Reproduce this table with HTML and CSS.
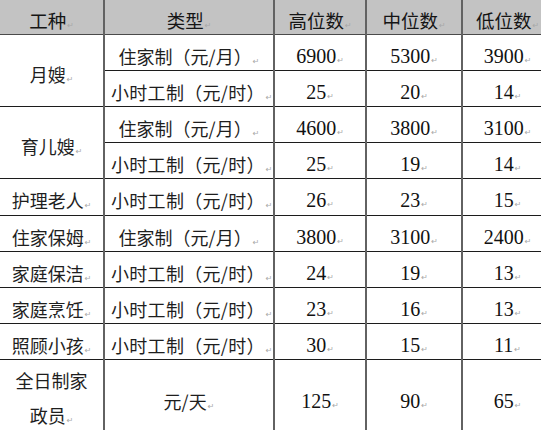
FILE: index.html
```html
<!DOCTYPE html>
<html lang="zh">
<head>
<meta charset="utf-8">
<link rel="stylesheet" href="styles.css">
</head>
<body>
<table class="wage">
  <colgroup>
    <col class="c1"><col class="c2"><col class="c3"><col class="c4"><col class="c5">
  </colgroup>
  <thead>
    <tr class="head">
      <th>工种<span class="pm">↵</span></th>
      <th>类型<span class="pm">↵</span></th>
      <th>高位数<span class="pm">↵</span></th>
      <th>中位数<span class="pm">↵</span></th>
      <th>低位数<span class="pm">↵</span></th>
    </tr>
  </thead>
  <tbody>
    <tr>
      <td class="job" rowspan="2">月嫂<span class="pm">↵</span></td>
      <td class="type">住家制（元/月）<span class="pm">↵</span></td>
      <td class="num">6900<span class="pm">↵</span></td>
      <td class="num">5300<span class="pm">↵</span></td>
      <td class="num">3900<span class="pm">↵</span></td>
    </tr>
    <tr>
      <td class="type hourly">小时工制（元/时）<span class="pm">↵</span></td>
      <td class="num">25<span class="pm">↵</span></td>
      <td class="num">20<span class="pm">↵</span></td>
      <td class="num">14<span class="pm">↵</span></td>
    </tr>
    <tr>
      <td class="job" rowspan="2">育儿嫂<span class="pm">↵</span></td>
      <td class="type">住家制（元/月）<span class="pm">↵</span></td>
      <td class="num">4600<span class="pm">↵</span></td>
      <td class="num">3800<span class="pm">↵</span></td>
      <td class="num">3100<span class="pm">↵</span></td>
    </tr>
    <tr>
      <td class="type hourly">小时工制（元/时）<span class="pm">↵</span></td>
      <td class="num">25<span class="pm">↵</span></td>
      <td class="num">19<span class="pm">↵</span></td>
      <td class="num">14<span class="pm">↵</span></td>
    </tr>
    <tr class="tall">
      <td class="job">护理老人<span class="pm">↵</span></td>
      <td class="type hourly">小时工制（元/时）<span class="pm">↵</span></td>
      <td class="num">26<span class="pm">↵</span></td>
      <td class="num">23<span class="pm">↵</span></td>
      <td class="num">15<span class="pm">↵</span></td>
    </tr>
    <tr>
      <td class="job">住家保姆<span class="pm">↵</span></td>
      <td class="type">住家制（元/月）<span class="pm">↵</span></td>
      <td class="num">3800<span class="pm">↵</span></td>
      <td class="num">3100<span class="pm">↵</span></td>
      <td class="num">2400<span class="pm">↵</span></td>
    </tr>
    <tr>
      <td class="job">家庭保洁<span class="pm">↵</span></td>
      <td class="type hourly">小时工制（元/时）<span class="pm">↵</span></td>
      <td class="num">24<span class="pm">↵</span></td>
      <td class="num">19<span class="pm">↵</span></td>
      <td class="num">13<span class="pm">↵</span></td>
    </tr>
    <tr>
      <td class="job">家庭烹饪<span class="pm">↵</span></td>
      <td class="type hourly">小时工制（元/时）<span class="pm">↵</span></td>
      <td class="num">23<span class="pm">↵</span></td>
      <td class="num">16<span class="pm">↵</span></td>
      <td class="num">13<span class="pm">↵</span></td>
    </tr>
    <tr class="r37">
      <td class="job">照顾小孩<span class="pm">↵</span></td>
      <td class="type hourly">小时工制（元/时）<span class="pm">↵</span></td>
      <td class="num">30<span class="pm">↵</span></td>
      <td class="num">15<span class="pm">↵</span></td>
      <td class="num">11<span class="pm">↵</span></td>
    </tr>
    <tr class="last">
      <td class="job wrap">全日制家政员<span class="pm">↵</span></td>
      <td class="type">元/天<span class="pm">↵</span></td>
      <td class="num">125<span class="pm">↵</span></td>
      <td class="num">90<span class="pm">↵</span></td>
      <td class="num">65<span class="pm">↵</span></td>
    </tr>
  </tbody>
</table>
</body>
</html>
```

FILE: styles.css
```css
html, body {
  margin: 0;
  padding: 0;
  background: #ffffff;
  overflow: hidden;
}

.wage {
  border-collapse: collapse;
  table-layout: fixed;
  width: 552px;
  color: #1e1e1e;
  font-family: "Noto Sans CJK SC", "Noto Sans", sans-serif;
}

.c1 { width: 104px; }
.c2 { width: 170px; }
.c3 { width: 92px; }
.c4 { width: 96px; }
.c5 { width: 90px; }

.wage th,
.wage td {
  padding: 7px 0 0 0;
  text-align: center;
  vertical-align: middle;
  border-bottom: 1px solid #1c1c1c;
  border-left: 2px solid #626262;
  white-space: nowrap;
  overflow: hidden;
  line-height: 22px;
}

.wage th:first-child,
.wage td.job {
  border-left: none;
}

.head {
  height: 34px;
  background: #c3c3c3;
}

.head th {
  font-weight: normal;
  font-size: 18.5px;
  color: #151515;
  border-bottom: 1px solid #4a4a4a;
}

tbody tr { height: 36px; }
tbody tr.tall { height: 37px; }
tbody tr.r37 { height: 36px; }
tbody tr.last { height: 76px; }

.job {
  font-size: 18px;
  padding-left: 8px;
  padding-right: 8px;
}

.wage td.job.wrap {
  white-space: normal;
  vertical-align: top;
  line-height: 35px;
  padding: 3px 8px 0 8px;
}

.type {
  font-size: 18px;
}

.wage td.type.hourly {
  text-align: left;
  padding-left: 6px;
  letter-spacing: 0.3px;
}

.num {
  font-family: "Liberation Serif", "Times New Roman", serif;
  font-size: 20px;
  color: #111111;
}

.pm {
  font-family: "DejaVu Sans", sans-serif;
  font-size: 8px;
  line-height: 0;
  letter-spacing: 0;
  color: #a8a8a8;
  margin-left: 1px;
}
```
